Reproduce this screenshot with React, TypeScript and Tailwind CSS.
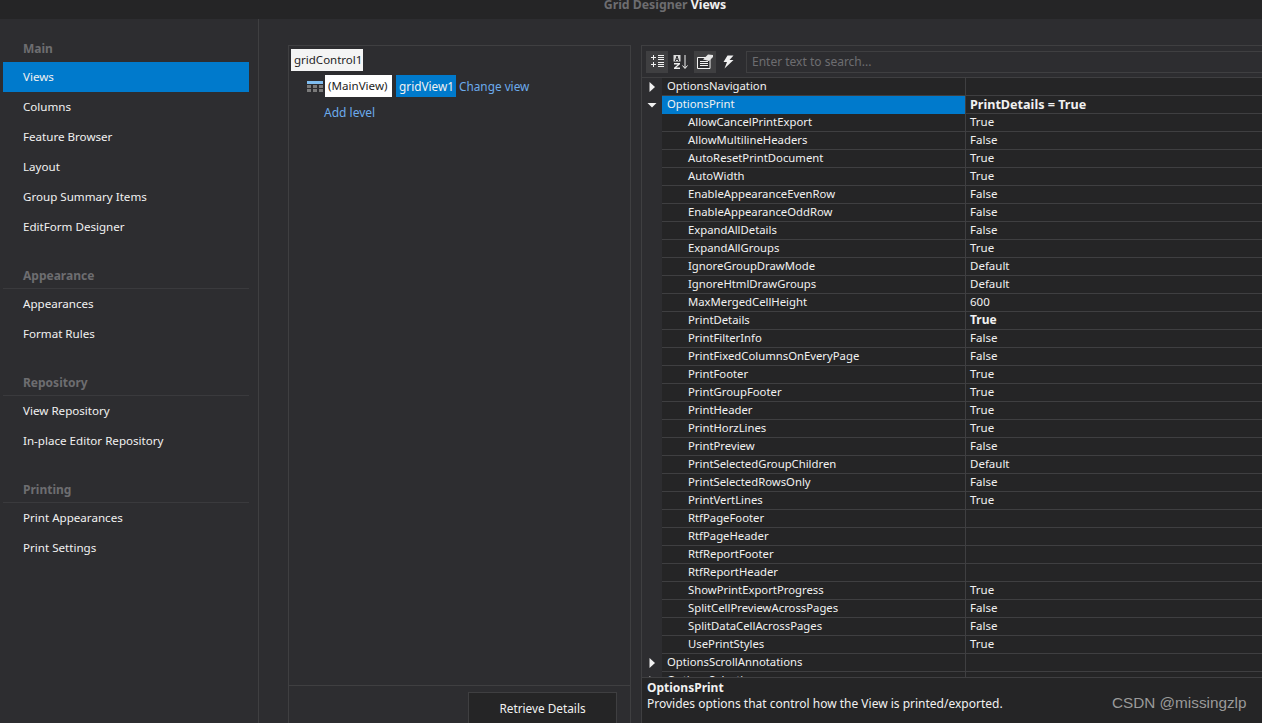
const font = { fontFamily: '"Noto Sans", Tahoma, sans-serif' };

const groups = [
  { title: "Main", line: false, items: ["Views", "Columns", "Feature Browser", "Layout", "Group Summary Items", "EditForm Designer"] },
  { title: "Appearance", line: true, items: ["Appearances", "Format Rules"] },
  { title: "Repository", line: true, items: ["View Repository", "In-place Editor Repository"] },
  { title: "Printing", line: true, items: ["Print Appearances", "Print Settings"] },
];

const rows: [string, string][] = [
  ["AllowCancelPrintExport", "True"],
  ["AllowMultilineHeaders", "False"],
  ["AutoResetPrintDocument", "True"],
  ["AutoWidth", "True"],
  ["EnableAppearanceEvenRow", "False"],
  ["EnableAppearanceOddRow", "False"],
  ["ExpandAllDetails", "False"],
  ["ExpandAllGroups", "True"],
  ["IgnoreGroupDrawMode", "Default"],
  ["IgnoreHtmlDrawGroups", "Default"],
  ["MaxMergedCellHeight", "600"],
  ["PrintDetails", "True"],
  ["PrintFilterInfo", "False"],
  ["PrintFixedColumnsOnEveryPage", "False"],
  ["PrintFooter", "True"],
  ["PrintGroupFooter", "True"],
  ["PrintHeader", "True"],
  ["PrintHorzLines", "True"],
  ["PrintPreview", "False"],
  ["PrintSelectedGroupChildren", "Default"],
  ["PrintSelectedRowsOnly", "False"],
  ["PrintVertLines", "True"],
  ["RtfPageFooter", ""],
  ["RtfPageHeader", ""],
  ["RtfReportFooter", ""],
  ["RtfReportHeader", ""],
  ["ShowPrintExportProgress", "True"],
  ["SplitCellPreviewAcrossPages", "False"],
  ["SplitDataCellAcrossPages", "False"],
  ["UsePrintStyles", "True"],
];

function Arrow({ open }: { open?: boolean }) {
  return (
    <svg width="10" height="10" viewBox="0 0 10 10" className="block">
      {open ? <path d="M0.5 3h9L5 7.5z" fill="#f1f1f1" /> : <path d="M2.5 0v10L8 5z" fill="#f1f1f1" />}
    </svg>
  );
}

function CategoryRow({ name, value, open, selected }: { name: string; value?: string; open?: boolean; selected?: boolean }) {
  return (
    <div className="flex h-[18px] shrink-0">
      <div className="flex w-[20px] shrink-0 items-center justify-center bg-[#2d2d30]">
        <Arrow open={open} />
      </div>
      <div className={`flex w-[303px] shrink-0 items-center border-b pb-[2px] pl-[5px] text-[11.3px] ${selected ? "border-[#007acc] bg-[#007acc]" : "border-[#3f3f41]"}`}>
        {name}
      </div>
      <div className="flex flex-1 items-center border-b border-l border-[#3f3f41] pl-[4px] text-[12.6px] font-bold">{value}</div>
    </div>
  );
}

function PropRow({ name, value }: { name: string; value: string }) {
  return (
    <div className="flex h-[18px] shrink-0">
      <div className="w-[20px] shrink-0 bg-[#2d2d30]" />
      <div className="flex w-[303px] shrink-0 items-center border-b border-[#3f3f41] pb-[2px] pl-[26px] text-[11.3px]">{name}</div>
      <div className={`flex flex-1 items-center border-b border-l border-[#3f3f41] pb-[2px] pl-[4px] ${name === "PrintDetails" ? "text-[12px] font-bold" : "text-[11.5px]"}`}>{value}</div>
    </div>
  );
}

export default function App() {
  return (
    <div className="relative flex h-[723px] w-[1262px] flex-col overflow-hidden bg-[#2d2d30] text-[12px] leading-[16px] text-[#f1f1f1]" style={font}>
      <div className="flex h-[19px] shrink-0 justify-center overflow-hidden bg-[#252526] pl-[68px] text-[12.3px] font-bold">
        <div className="-mt-[3px] leading-[16px]">
          <span className="text-[#6d6d70]">Grid Designer </span>
          <span>Views</span>
        </div>
      </div>

      <div className="flex min-h-0 flex-1">
        <aside className="flex w-[259px] shrink-0 flex-col gap-[21px] border-r border-[#3f3f41] pt-[17px]">
          {groups.map((g) => (
            <div key={g.title}>
              <div className={`ml-[3px] mr-[9px] flex h-[26px] items-start border-b pl-[20px] pt-[5px] font-bold text-[#6d6d70] ${g.line ? "border-[#3a3a3d]" : "border-transparent"}`}>
                {g.title}
              </div>
              {g.items.map((it) => (
                <div key={it} className={`ml-[3px] mr-[9px] flex h-[30px] items-center pl-[20px] text-[11.6px] ${it === "Views" ? "bg-[#007acc]" : ""}`}>
                  {it}
                </div>
              ))}
            </div>
          ))}
        </aside>

        <div className="flex min-w-0 flex-1 gap-[10px] pl-[29px] pt-[26px]">
          <section className="flex w-[343px] shrink-0 flex-col border-x border-t border-[#3f3f41]">
            <div className="flex-1 pl-[2px] pt-[3px]">
              <div className="flex h-[22px] w-[72px] items-center bg-[#f4f4f4] pl-[3px] text-[11.5px] text-[#1e1e1e]">gridControl1</div>
              <div className="mt-[4px] flex h-[22px] items-center pl-[16px]">
                <svg width="16" height="12" viewBox="0 0 16 12" className="mr-[2px] mt-[2px] block">
                  <rect x="0" y="0" width="16" height="3" fill="#7fbdf0" />
                  <g fill="#7a7a7a">
                    <rect x="0" y="4" width="4" height="3" />
                    <rect x="6" y="4" width="4" height="3" />
                    <rect x="12" y="4" width="4" height="3" />
                    <rect x="0" y="8" width="4" height="3" />
                    <rect x="6" y="8" width="4" height="3" />
                    <rect x="12" y="8" width="4" height="3" />
                  </g>
                </svg>
                <div className="flex h-[22px] w-[67px] items-center bg-white pl-[3px] text-[11.6px] text-[#1e1e1e]">(MainView)</div>
                <div className="ml-[4px] flex h-[22px] w-[60px] items-center bg-[#007acc] pl-[3px] text-[11.8px]">gridView1</div>
                <div className="ml-[3px] text-[11.8px] text-[#6cabec]">Change view</div>
              </div>
              <div className="ml-[33px] mt-[8px] text-[#6cabec]">Add level</div>
            </div>
            <div className="flex h-[38px] shrink-0 justify-end border-t border-[#3f3f41] pr-[13px] pt-[6px]">
              <button className="h-[32px] w-[149px] border border-b-0 border-[#3f3f41] bg-[#252526] pb-[1px] text-[11.8px] text-[#f1f1f1]">Retrieve Details</button>
            </div>
          </section>

          <section className="flex min-w-0 flex-1 flex-col border-l border-t border-[#3f3f41] bg-[#252526]">
            <div className="flex h-[32px] shrink-0 items-center border-b border-[#3f3f41] bg-[#2d2d30] pl-[4px]">
              <div className="flex h-[22px] w-[22px] items-center justify-center bg-[#3f3f41]">
                <svg width="13" height="13" viewBox="0 0 13 13" className="block" shapeRendering="crispEdges">
                  <path d="M0 2.5h5M2.5 0v5M0 9.5h5M2.5 7v5M7 0.5h6M7 2.5h6M7 4.5h6M7 7.5h6M7 9.5h6M7 11.5h6" stroke="#f1f1f1" strokeWidth="1" fill="none" />
                </svg>
              </div>
              <div className="flex h-[22px] w-[26px] items-center justify-center">
                <svg width="16" height="16" viewBox="0 0 16 16" className="block">
                  <rect x="0.5" y="1" width="7" height="6.5" fill="#dcdcdc" />
                  <path d="M2.3 7L4 2l1.7 5M2.9 5.4h2.2" stroke="#2d2d30" strokeWidth="1" fill="none" />
                  <path d="M1 9h6v1.2L3.2 13.6H7V15H1v-1.2L4.8 10.4H1z" fill="#f1f1f1" />
                  <path d="M12 1v13M9.5 11.5L12 14.5l2.5-3" stroke="#f1f1f1" strokeWidth="1" fill="none" />
                </svg>
              </div>
              <div className="flex h-[22px] w-[22px] items-center justify-center bg-[#3f3f41]">
                <svg width="16" height="15" viewBox="0 0 16 15" className="block">
                  <path d="M0.5 3.5h11.5l1 1.5v9.5H0.5z" fill="#2d2d30" stroke="#f1f1f1" strokeWidth="1" />
                  <path d="M3 7.5h8M3 9.5h8M3 11.5h8" stroke="#f1f1f1" strokeWidth="1" />
                  <path d="M6 5.5L11 0.5l5 0.5v2L12 7z" fill="#e6e6e6" />
                </svg>
              </div>
              <div className="flex h-[22px] w-[24px] items-center justify-center">
                <svg width="11" height="14" viewBox="0 0 11 14" className="block">
                  <path d="M4.5 0.5L10.5 0.5L6.5 5H10.5L1.5 13.5L4 7H0.5z" fill="#f1f1f1" />
                </svg>
              </div>
              <div className="ml-[6px] flex h-[22px] flex-1 items-center border border-r-0 border-[#3f3f41] bg-[#2d2d30] pl-[5px] text-[#6d6d70]">
                Enter text to search...
              </div>
            </div>

            <div className="flex min-h-0 flex-1 flex-col overflow-hidden">
              <CategoryRow name="OptionsNavigation" />
              <CategoryRow name="OptionsPrint" value="PrintDetails = True" open selected />
              {rows.map(([n, v]) => (
                <PropRow key={n} name={n} value={v} />
              ))}
              <CategoryRow name="OptionsScrollAnnotations" />
              <CategoryRow name="OptionsSelection" />
            </div>

            <div className="h-[46px] shrink-0 border-t border-[#3f3f41] pl-[5px] pt-[2px]">
              <div className="font-bold">OptionsPrint</div>
              <div>Provides options that control how the View is printed/exported.</div>
            </div>
          </section>
        </div>
      </div>

      <div className="absolute left-[1112px] top-[693px] text-[15.3px] leading-[20px] text-[#9a9a9a]" style={{ fontFamily: '"Liberation Sans", sans-serif' }}>
        CSDN @missingzlp
      </div>
    </div>
  );
}
